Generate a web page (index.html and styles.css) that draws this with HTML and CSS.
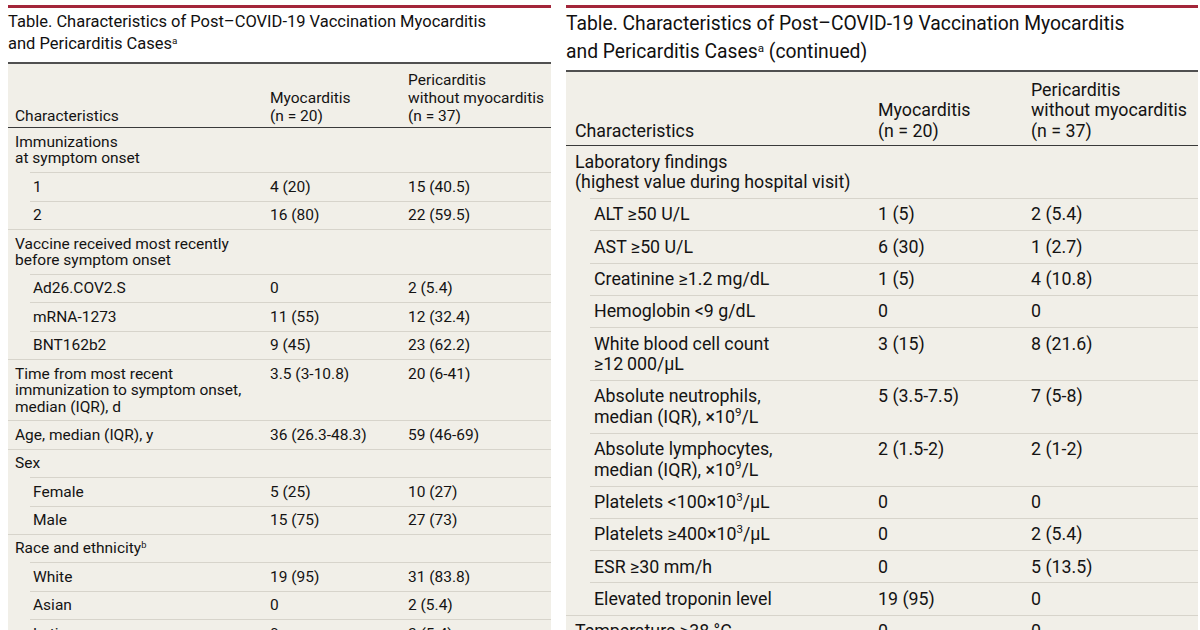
FILE: index.html
```html
<!DOCTYPE html>
<html lang="en">
<head>
<meta charset="utf-8">
<title>Characteristics of Post–COVID-19 Vaccination Myocarditis and Pericarditis Cases</title>
<link rel="stylesheet" href="styles.css">
</head>
<body>
<main class="page">
  <section class="panel panel-left">
    <h2 class="title">Table. Characteristics of Post–COVID-19 Vaccination Myocarditis<br>and Pericarditis Cases<sup class="fn">a</sup></h2>
    <div class="tbl">
      <div class="row head">
        <div class="c1">Characteristics</div>
        <div>Myocarditis<br>(n = 20)</div>
        <div>Pericarditis<br>without myocarditis<br>(n = 37)</div>
      </div>
      <div class="row in"><div class="c1">Immunizations<br>at symptom onset</div><div></div><div></div></div>
      <div class="row in sub"><div class="c1">1</div><div>4 (20)</div><div>15 (40.5)</div></div>
      <div class="row sub"><div class="c1">2</div><div>16 (80)</div><div>22 (59.5)</div></div>
      <div class="row in"><div class="c1">Vaccine received most recently<br>before symptom onset</div><div></div><div></div></div>
      <div class="row in sub"><div class="c1">Ad26.COV2.S</div><div>0</div><div>2 (5.4)</div></div>
      <div class="row in sub"><div class="c1">mRNA-1273</div><div>11 (55)</div><div>12 (32.4)</div></div>
      <div class="row sub"><div class="c1">BNT162b2</div><div>9 (45)</div><div>23 (62.2)</div></div>
      <div class="row"><div class="c1">Time from most recent<br>immunization to symptom onset,<br>median (IQR), d</div><div>3.5 (3-10.8)</div><div>20 (6-41)</div></div>
      <div class="row"><div class="c1">Age, median (IQR), y</div><div>36 (26.3-48.3)</div><div>59 (46-69)</div></div>
      <div class="row in"><div class="c1">Sex</div><div></div><div></div></div>
      <div class="row in sub"><div class="c1">Female</div><div>5 (25)</div><div>10 (27)</div></div>
      <div class="row sub"><div class="c1">Male</div><div>15 (75)</div><div>27 (73)</div></div>
      <div class="row in"><div class="c1">Race and ethnicity<sup class="fn">b</sup></div><div></div><div></div></div>
      <div class="row in sub"><div class="c1">White</div><div>19 (95)</div><div>31 (83.8)</div></div>
      <div class="row in sub"><div class="c1">Asian</div><div>0</div><div>2 (5.4)</div></div>
      <div class="row in sub"><div class="c1">Latino</div><div>0</div><div>2 (5.4)</div></div>
    </div>
  </section>

  <section class="panel panel-right">
    <h2 class="title">Table. Characteristics of Post–COVID-19 Vaccination Myocarditis<br>and Pericarditis Cases<sup class="fn">a</sup> (continued)</h2>
    <div class="tbl">
      <div class="row head">
        <div class="c1">Characteristics</div>
        <div>Myocarditis<br>(n = 20)</div>
        <div>Pericarditis<br>without myocarditis<br>(n = 37)</div>
      </div>
      <div class="row in"><div class="c1">Laboratory findings<br>(highest value during hospital visit)</div><div></div><div></div></div>
      <div class="row in sub"><div class="c1">ALT ≥50 U/L</div><div>1 (5)</div><div>2 (5.4)</div></div>
      <div class="row in sub"><div class="c1">AST ≥50 U/L</div><div>6 (30)</div><div>1 (2.7)</div></div>
      <div class="row in sub"><div class="c1">Creatinine ≥1.2 mg/dL</div><div>1 (5)</div><div>4 (10.8)</div></div>
      <div class="row in sub"><div class="c1">Hemoglobin &lt;9 g/dL</div><div>0</div><div>0</div></div>
      <div class="row in sub"><div class="c1">White blood cell count<br>≥12&#8201;000/µL</div><div>3 (15)</div><div>8 (21.6)</div></div>
      <div class="row in sub"><div class="c1">Absolute neutrophils,<br>median (IQR), ×10<sup class="ex">9</sup>/L</div><div>5 (3.5-7.5)</div><div>7 (5-8)</div></div>
      <div class="row in sub"><div class="c1">Absolute lymphocytes,<br>median (IQR), ×10<sup class="ex">9</sup>/L</div><div>2 (1.5-2)</div><div>2 (1-2)</div></div>
      <div class="row in sub"><div class="c1">Platelets &lt;100×10<sup class="ex">3</sup>/µL</div><div>0</div><div>0</div></div>
      <div class="row in sub"><div class="c1">Platelets ≥400×10<sup class="ex">3</sup>/µL</div><div>0</div><div>2 (5.4)</div></div>
      <div class="row in sub"><div class="c1">ESR ≥30 mm/h</div><div>0</div><div>5 (13.5)</div></div>
      <div class="row sub"><div class="c1">Elevated troponin level</div><div>19 (95)</div><div>0</div></div>
      <div class="row"><div class="c1">Temperature ≥38 °C</div><div>0</div><div>0</div></div>
    </div>
  </section>
</main>
</body>
</html>
```

FILE: styles.css
```css
html, body {
  margin: 0;
  padding: 0;
  background: #ffffff;
  height: 630px;
  overflow: hidden;
}

body {
  font-family: Roboto, "Liberation Sans", sans-serif;
  color: #141313;
}

.page {
  display: flex;
  gap: 15px;
  padding-left: 8px;
  height: 630px;
  overflow: hidden;
}

.panel {
  margin-top: 5px;
  border-top: 3px solid #a3263a;
  flex: none;
}

.panel-left {
  width: 543px;
  --c1: 262px;
  --c2: 138px;
  --p1: 7px;
  --p2: 25px;
  --inset: 22px;
  --pad: 5.45px;
  --fs: 15.5px;
  --lh: 16.5px;
}

.panel-right {
  width: 632px;
  --c1: 312px;
  --c2: 153px;
  --p1: 9px;
  --p2: 28px;
  --inset: 24px;
  --pad: 5.4px;
  --fs: 17.8px;
  --lh: 20.5px;
}

.title {
  font-weight: 400;
  color: #111010;
}

.panel-left .title {
  font-size: 16.5px;
  line-height: 22.5px;
  margin: 2.6px 0 6.4px 0;
}

.panel-right .title {
  font-size: 19.3px;
  line-height: 28px;
  margin: 2px 0 4.3px 0;
}

.fn {
  font-size: 0.6em;
  line-height: 0;
  vertical-align: 0.55em;
}

.ex {
  font-size: 0.65em;
  line-height: 0;
  vertical-align: 0.6em;
}

.tbl {
  background: #f1efe8;
  font-size: var(--fs);
  line-height: var(--lh);
  height: 700px;
}

.row {
  display: grid;
  grid-template-columns: var(--c1) var(--c2) 1fr;
  padding-top: var(--pad);
  padding-bottom: calc(var(--pad) + 1px);
  background-image: linear-gradient(#d7d4cb, #d7d4cb);
  background-repeat: no-repeat;
  background-position: left bottom;
  background-size: 100% 1px;
}

.row.in {
  background-position: right bottom;
  background-size: calc(100% - var(--inset)) 1px;
}

.c1 {
  padding-left: var(--p1);
}

.sub .c1 {
  padding-left: var(--p2);
}

.row.head {
  align-items: end;
  border-top: 2px solid #505050;
  border-bottom: 1px solid #3a3a3a;
  background: none;
}

.panel-left .row.head {
  padding-top: 7.5px;
  padding-bottom: 2px;
  line-height: 18px;
}

.panel-right .row.head {
  padding-top: 7.5px;
  padding-bottom: 4px;
  line-height: 20.5px;
}
```
